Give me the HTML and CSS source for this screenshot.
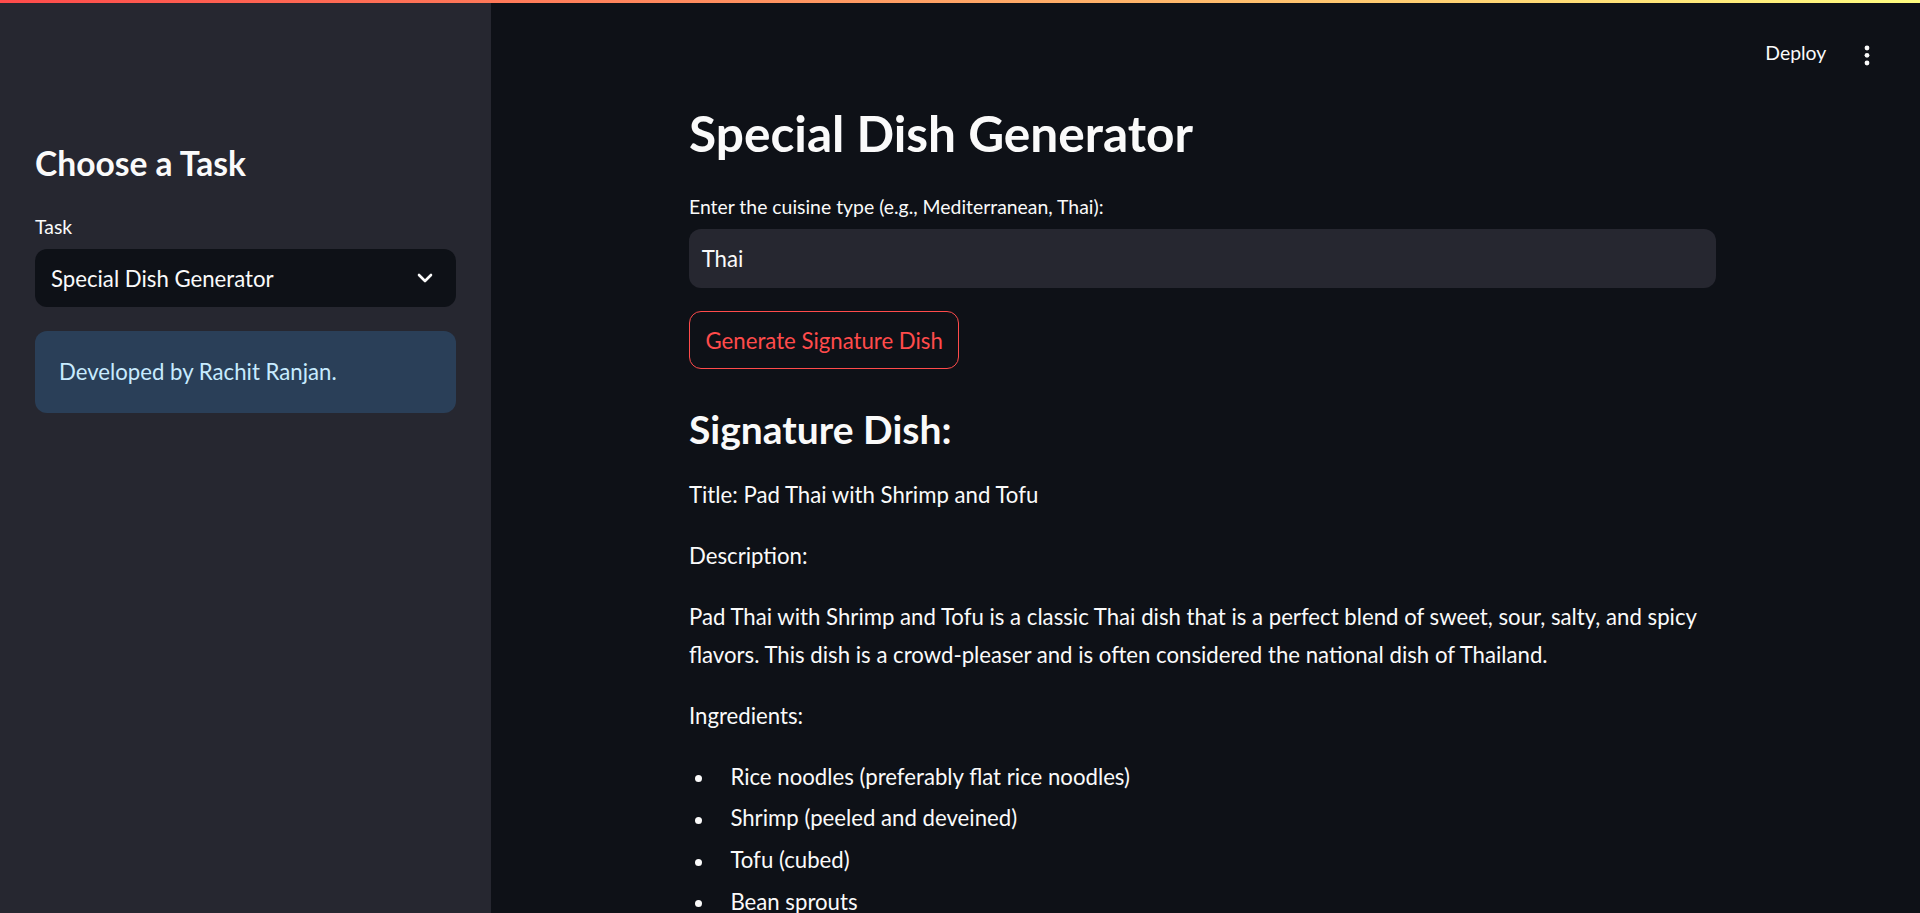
FILE: index.html
```html
<!DOCTYPE html>
<html lang="en">
<head>
<meta charset="utf-8">
<title>Special Dish Generator</title>
<link rel="stylesheet" href="styles.css">
</head>
<body>
<div class="deco"></div>
<div class="app">
  <aside class="sidebar">
    <h2 class="side-title">Choose a Task</h2>
    <label class="label">Task</label>
    <div class="select">
      <span>Special Dish Generator</span>
      <svg class="chev" width="16" height="10" viewBox="0 0 16 10"><polyline points="2,2 8,8 14,2" fill="none" stroke="#fafafa" stroke-width="2.6" stroke-linecap="round" stroke-linejoin="round"/></svg>
    </div>
    <div class="info">Developed by Rachit Ranjan.</div>
  </aside>
  <main class="main">
    <header class="topbar">
      <span class="deploy">Deploy</span>
      <svg class="kebab" width="20" height="24" viewBox="0 0 20 24"><circle cx="10" cy="4" r="2.4" fill="#fafafa"/><circle cx="10" cy="11.3" r="2.4" fill="#fafafa"/><circle cx="10" cy="19" r="2.4" fill="#fafafa"/></svg>
    </header>
    <section class="block">
      <h2 class="title">Special Dish Generator</h2>
      <label class="label">Enter the cuisine type (e.g., Mediterranean, Thai):</label>
      <div class="input">Thai</div>
      <button class="btn">Generate Signature Dish</button>
      <h3 class="subheader">Signature Dish:</h3>
      <div class="md">
        <p>Title: Pad Thai with Shrimp and Tofu</p>
        <p>Description:</p>
        <p>Pad Thai with Shrimp and Tofu is a classic Thai dish that is a perfect blend of sweet, sour, salty, and spicy flavors. This dish is a crowd-pleaser and is often considered the national dish of Thailand.</p>
        <p>Ingredients:</p>
        <ul>
          <li>Rice noodles (preferably flat rice noodles)</li>
          <li>Shrimp (peeled and deveined)</li>
          <li>Tofu (cubed)</li>
          <li>Bean sprouts</li>
        </ul>
      </div>
    </section>
  </main>
</div>
</body>
</html>
```
FILE: styles.css
```css
* { box-sizing: border-box; }
html, body { margin: 0; padding: 0; height: 100%; }
body {
  background: #0e1117;
  color: #fafafa;
  font-family: Lato, "Noto Sans", sans-serif;
  display: flex;
  flex-direction: column;
  overflow: hidden;
}
.deco {
  height: 3px;
  flex: 0 0 3px;
  background: linear-gradient(90deg, #ff4b4b, #fffd80);
}
.app {
  flex: 1;
  display: flex;
  min-height: 0;
}
.sidebar {
  width: 491px;
  flex: 0 0 491px;
  background: #262730;
  padding: 140px 35px 0 35px;
  display: flex;
  flex-direction: column;
}
.side-title {
  margin: 0;
  font-size: 33.6px;
  font-weight: 700;
  line-height: 40px;
}
.label {
  display: block;
  font-size: 19.4px;
  line-height: 31px;
  color: #fafafa;
}
.sidebar .label { margin-top: 28px; }
.select {
  margin-top: 7px;
  height: 58.3px;
  background: #0e1117;
  border-radius: 12px;
  display: flex;
  align-items: center;
  justify-content: space-between;
  padding: 0 22.7px 0 16px;
  font-size: 22.2px;
}
.chev { display: block; }
.info {
  margin-top: 23.7px;
  background: #2a3f58;
  color: #c7ebff;
  border-radius: 12px;
  padding: 21.6px 24px;
  font-size: 22.2px;
  line-height: 38.4px;
}
.main {
  flex: 1;
  min-width: 0;
  display: flex;
  flex-direction: column;
  padding-right: 6px;
}
.topbar {
  height: 80px;
  flex: 0 0 80px;
  display: flex;
  justify-content: flex-end;
  align-items: flex-start;
  padding-top: 38px;
  padding-right: 37px;
}
.deploy {
  font-size: 19.4px;
  line-height: 1.2;
  margin-right: 30.7px;
}
.kebab { margin-top: 3px; display: block; }
.block {
  width: 1027px;
  margin: 0 auto;
}
.title {
  margin: 20.3px 0 0 0;
  font-size: 49.6px;
  font-weight: 700;
  line-height: 60px;
}
.block .label { margin-top: 27.7px; }
.input {
  margin-top: 7.3px;
  height: 58.4px;
  background: #262730;
  border-radius: 12px;
  display: flex;
  align-items: center;
  padding-left: 12.7px;
  font-size: 22.2px;
}
.btn {
  display: block;
  margin-top: 23.6px;
  height: 58px;
  padding: 0 15.5px;
  background: #0e1117;
  border: 1px solid #ff4b4b;
  border-radius: 12px;
  color: #ff4b4b;
  font-family: inherit;
  font-size: 22.2px;
}
.subheader {
  margin: 36.3px 0 0 0;
  font-size: 39px;
  font-weight: 700;
  line-height: 46.7px;
}
.md {
  margin-top: 23.9px;
  font-size: 22.2px;
  line-height: 38.4px;
}
.md p { margin: 0 0 22.4px 0; }
.md ul { margin: 0; padding: 0; list-style: none; }
.md li {
  display: flex;
  align-items: flex-start;
  margin-bottom: 3.3px;
}
.md li::before {
  content: "";
  flex: 0 0 7px;
  height: 7px;
  border-radius: 50%;
  background: #fafafa;
  margin: 17.6px 28.4px 0 6px;
}
```
